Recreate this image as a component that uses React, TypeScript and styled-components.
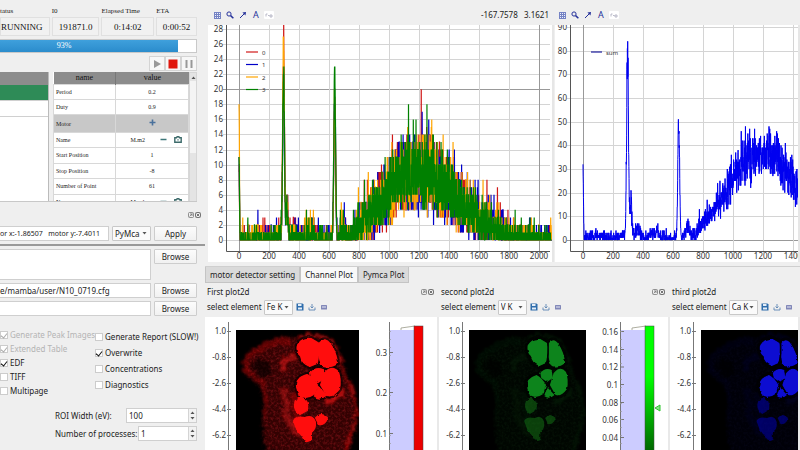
import React from "react";
import styled, { createGlobalStyle } from "styled-components";

const ui = `"Noto Sans", "Open Sans", sans-serif`;
const serif = `"Liberation Serif", "Times New Roman", serif`;

const GlobalStyle = createGlobalStyle`
  * { box-sizing: border-box; }
  body { margin: 0; background: #efefef; color: #222; font: 8px/12px ${ui}; }
  button, input, select, textarea { font: inherit; color: inherit; margin: 0; }
`;

/* ---------- layout ---------- */

const Page = styled.div`
  display: grid;
  grid-template-columns: minmax(205px, 1fr) minmax(0, 3fr);
  height: 100vh;
  overflow: hidden;
`;

const Sidebar = styled.aside`
  display: flex;
  flex-direction: column;
  padding: 6px 8px 0 0;
  min-width: 0;
`;

const Workspace = styled.main`
  display: flex;
  flex-direction: column;
  min-width: 0;
  min-height: 0;
`;

/* ---------- scan status ---------- */

const StatusGrid = styled.dl`
  display: grid;
  grid-template-columns: 50fr 48fr 53fr 41fr;
  column-gap: 2px;
  margin: 0;
  font-family: ${serif};
`;

const StatusItem = styled.div`
  min-width: 0;
  dt { font-size: 7px; line-height: 11px; }
  dd {
    margin: 0;
    height: 19px;
    border: 1px solid #e0e0e0;
    background: #f1f1f1;
    font-size: 9px;
    line-height: 18px;
    text-align: center;
    color: #111;
    white-space: nowrap;
  }
  &:first-child dd { padding-right: 7px; text-align: right; }
`;

const Progress = styled.div`
  display: grid;
  height: 14px;
  margin-top: 3px;
  border: 1px solid #c9c9c9;
  border-left: 0;
  background: #fff;
  > * { grid-area: 1 / 1; }
`;

const ProgressFill = styled.div`
  height: 12px;
  background: linear-gradient(#3fa0dc, #2b8ccc);
`;

const ProgressLabel = styled.span`
  padding-left: 29%;
  color: #fff;
  font: 8px/12px ${serif};
`;

const Transport = styled.div`
  display: flex;
  justify-content: flex-end;
  margin: 3px 0 1px;
`;

const TransportButton = styled.button`
  display: grid;
  place-items: center;
  width: 16px;
  height: 15px;
  padding: 0;
  border: 1px solid #d4d4d4;
  background: #f7f7f7;
`;

/* ---------- parameter table ---------- */

const ScanArea = styled.div`
  display: grid;
  grid-template-columns: 49fr 144fr;
  column-gap: 4px;
  height: 130px;
  border-bottom: 1px solid #c8c8c8;
`;

const ScanList = styled.div`
  background: #fff;
  border-right: 1px solid #bbb;
`;

const ListHead = styled.div`
  height: 13px;
  background: #8c8c8c;
`;

const ListRow = styled.div<{ $active?: boolean }>`
  height: 16px;
  background: ${(p) => (p.$active ? "#2e8b57" : "#fff")};
  border-bottom: 1px solid #d0d0d0;
`;

const TableScroll = styled.div`
  display: grid;
  grid-template-columns: minmax(0, 1fr) 8px;
  overflow: hidden;
  background: #fff;
`;

const ParamTable = styled.table`
  width: 100%;
  height: 138px;
  border-collapse: collapse;
  table-layout: fixed;
  font: 6px/8px ${serif};
  th { height: 12px; padding: 0; background: #8c8c8c; font-size: 8px; font-weight: 400; color: #111; }
  th:first-child { width: 46%; border-right: 1px solid #777; }
  td { padding: 0 2px; border: 1px solid #d8d8d8; text-align: center; }
  td:first-child { text-align: left; }
`;

const ParamRow = styled.tr<{ $group?: boolean }>`
  background: ${(p) => (p.$group ? "#c8c8c8" : "#fff")};
`;

const MotorCell = styled.div`
  display: flex;
  justify-content: flex-end;
  align-items: center;
  gap: 15px;
`;

const CellTools = styled.span`
  display: flex;
  gap: 7px;
  padding-right: 4px;
`;

const CellButton = styled.button`
  display: inline-grid;
  place-items: center;
  padding: 0;
  border: 0;
  background: none;
`;

const Scrollbar = styled.div`
  display: flex;
  flex-direction: column;
  justify-content: space-between;
  align-items: center;
  padding: 3px 0;
  background: linear-gradient(#f4f4f4, #f4f4f4) 0 8px / 100% 72px no-repeat #e4e4e4;
  border: 1px solid #d6d6d6;
`;

/* ---------- form controls ---------- */

const DockButtons = styled.div`
  display: flex;
  gap: 1px;
`;

const DockRow = styled.div`
  display: flex;
  justify-content: flex-end;
  margin: 10px -4px 8px 0;
`;

const ControlRow = styled.div`
  display: flex;
  gap: 3px;
  align-items: flex-start;
`;

const TextField = styled.input`
  flex: 1;
  min-width: 0;
  height: 15px;
  padding: 0 2px 0 0;
  border: 1px solid #cfcfcf;
  border-left: 0;
  background: #fff;
`;

const PositionField = styled(TextField)`
  padding: 0;
  font-size: 7px;
`;

const FileList = styled.textarea`
  flex: 1;
  min-width: 0;
  height: 31px;
  border: 1px solid #cfcfcf;
  border-left: 0;
  background: #fff;
  resize: none;
`;

const PushButton = styled.button`
  width: 43px;
  height: 15px;
  padding: 0;
  border: 1px solid #cdcdcd;
  border-radius: 1px;
  background: linear-gradient(#fcfcfc, #f1f1f1);
  line-height: 12px;
`;

const SelectFrame = styled.label<{ $w: number }>`
  display: flex;
  align-items: center;
  width: ${(p) => p.$w}px;
  height: 15px;
  padding-right: 3px;
  border: 1px solid #c8c8c8;
  border-radius: 1px;
  background: #fafafa;
  select { flex: 1; min-width: 0; height: 13px; padding: 0 0 0 2px; border: 0; background: none; appearance: none; line-height: 12px; }
  svg { flex: none; pointer-events: none; }
`;

const Divider = styled.hr`
  width: calc(100% + 8px);
  margin: 3px 0 3px;
  border: 0;
  border-top: 2px solid #999;
`;

const FileRows = styled.div`
  display: flex;
  flex-direction: column;
  gap: 3px;
`;

const Options = styled.div`
  display: grid;
  grid-template-columns: 95fr 102fr;
  margin-top: 12px;
`;

const OptionColumn = styled.div<{ $step: number; $top: number }>`
  display: grid;
  align-content: start;
  grid-auto-rows: ${(p) => p.$step}px;
  padding-top: ${(p) => p.$top}px;
`;

const Check = styled.label<{ $dim?: boolean }>`
  display: flex;
  align-items: center;
  gap: 2px;
  color: ${(p) => (p.$dim ? "#b4b4b4" : "#222")};
  white-space: nowrap;
  input {
    display: grid;
    place-items: center;
    flex: none;
    width: 8px;
    height: 8px;
    appearance: none;
    border: 1px solid #ccc;
    background: #fff;
  }
  input:checked::after {
    content: "";
    width: 3px;
    height: 5px;
    border: solid ${(p) => (p.$dim ? "#aaa" : "#111")};
    border-width: 0 1px 1px 0;
    rotate: 38deg;
  }
`;

const NumberRows = styled.div`
  display: grid;
  gap: 3px;
  margin-top: 10px;
  padding-left: 55px;
`;

const NumberRow = styled.div`
  display: flex;
  align-items: center;
  justify-content: space-between;
  height: 15px;
  white-space: nowrap;
`;

const Spin = styled.div<{ $w: number }>`
  display: flex;
  width: ${(p) => p.$w}px;
  height: 15px;
  border: 1px solid #cfcfcf;
  background: #fff;
  input { flex: 1; min-width: 0; padding: 0 2px; border: 0; background: none; appearance: textfield; }
  input::-webkit-inner-spin-button { display: none; }
`;

const SpinButtons = styled.div`
  display: grid;
  width: 8px;
  background: #f2f2f2;
  border-left: 1px solid #d4d4d4;
  button { display: grid; place-items: center; padding: 0; border: 0; background: none; }
`;

/* ---------- plots ---------- */

const Charts = styled.section`
  display: grid;
  grid-template-columns: 349fr 246fr;
`;

const ChartPanel = styled.div`
  min-width: 0;
  padding-left: 3px;
  & + & { padding-left: 1px; }
`;

const PlotTools = styled.div`
  display: flex;
  align-items: center;
  gap: 3px;
  height: 25px;
  padding: 5px 5px 0 4px;
  ${ChartPanel} + ${ChartPanel} & { padding-left: 2px; }
`;

const ToolButton = styled.button`
  display: grid;
  place-items: center;
  width: 10px;
  height: 10px;
  padding: 0;
  border: 0;
  background: none;
  color: #24309a;
  line-height: 10px;
`;

const LetterButton = styled(ToolButton)`
  font-size: 9px;
`;

const Readout = styled.output`
  margin-left: auto;
  white-space: pre;
`;

const ChartSvg = styled.svg`
  display: block;
  width: 100%;
  height: 237px;
  background: #fff;
  border-right: 2px solid #e6e6e6;
  text { font: 8px ${ui}; fill: #333; }
`;

const Tabs = styled.nav`
  display: flex;
  height: 17px;
  margin-top: 4px;
  border-top: 1px solid #cfcfcf;
`;

const Tab = styled.button<{ $active?: boolean }>`
  padding: 0 4px;
  height: 16px;
  border: 1px solid #c4c4c4;
  border-top: 0;
  background: ${(p) => (p.$active ? "#f9f9f9" : "#dadada")};
  white-space: nowrap;
`;

const Maps = styled.section`
  display: grid;
  grid-template-columns: 234fr 231fr 130fr;
  flex: 1;
  min-height: 0;
`;

const MapPanel = styled.div`
  display: flex;
  flex-direction: column;
  min-width: 0;
  min-height: 0;
  overflow: hidden;
`;

const MapHead = styled.header`
  display: flex;
  align-items: center;
  justify-content: space-between;
  height: 15px;
  margin-top: 1px;
  padding: 0 5px 0 2px;
`;

const MapTools = styled.div`
  display: flex;
  align-items: center;
  gap: 2px;
  height: 16px;
  margin-bottom: 2px;
  padding-left: 2px;
  white-space: nowrap;
`;

const MapSvg = styled.svg`
  display: block;
  flex: 1;
  width: 100%;
  min-height: 0;
  background: #fff;
  border-right: 2px solid #e9e9e9;
  text { font: 8px ${ui}; fill: #333; text-anchor: end; }
`;

/* ---------- icons ---------- */

const Caret = ({ up }: { up?: boolean }) => (
  <svg width="5" height="3" viewBox="0 0 5 3">
    <path d={up ? "M.5 3 2.5.5 4.5 3z" : "M.5 0 2.5 2.5 4.5 0z"} fill="#555" />
  </svg>
);

const Plus = () => (
  <svg width="7" height="7" viewBox="0 0 7 7"><path d="M3.5.5v6M.5 3.5h6" stroke="#4a719c" strokeWidth="1.6" /></svg>
);
const Minus = () => (
  <svg width="7" height="7" viewBox="0 0 7 7"><path d="M.5 3.5h6" stroke="#3d7779" strokeWidth="1.5" /></svg>
);
const Camera = () => (
  <svg width="8" height="7" viewBox="0 0 8 7"><path d="M.8 1.8h1.700l.6-1h1.800l.6 1h1.700v4.400H.8z" fill="none" stroke="#3d6b6b" strokeWidth="1.4" /><circle cx="4" cy="3.9" r=".8" fill="#6d9292" /></svg>
);

const Dock = () => (
  <DockButtons>
    <CellButton aria-label="Float">
      <svg width="6" height="6" viewBox="0 0 6 6" fill="none" stroke="#777" strokeWidth=".8"><rect x=".5" y=".5" width="5" height="5" rx="1" /><path d="M1.5 4.5l3-3M2 2h2v2" /></svg>
    </CellButton>
    <CellButton aria-label="Close">
      <svg width="6" height="6" viewBox="0 0 6 6" fill="none" stroke="#666" strokeWidth=".9"><rect x=".5" y=".5" width="5" height="5" rx="1" /><path d="M1.5 1.5l3 3M4.5 1.5l-3 3" /></svg>
    </CellButton>
  </DockButtons>
);

function ChartToolbar({ readout }: { readout?: string }) {
  return (
    <PlotTools>
      <ToolButton aria-label="Grid">
        <svg width="7" height="7" viewBox="0 0 7 7"><path d="M0 0h7v7H0z" fill="#7583c4" /><path d="M1 1h1v1H1zM3 1h1v1H3zM5 1h1v1H5zM1 3h1v1H1zM3 3h1v1H3zM5 3h1v1H5zM1 5h1v1H1zM3 5h1v1H3zM5 5h1v1H5z" fill="#eef1fb" /></svg>
      </ToolButton>
      <ToolButton aria-label="Zoom">
        <svg width="8" height="8" viewBox="0 0 8 8" fill="none" stroke="#24309a"><circle cx="3" cy="3" r="2.1" strokeWidth="1" /><path d="M4.6 4.6 7.4 7.2" strokeWidth="1.5" /></svg>
      </ToolButton>
      <ToolButton aria-label="Cursor">
        <svg width="8" height="8" viewBox="0 0 8 8"><path d="M1 7 5.5 2.5" stroke="#24309a" /><path d="M3.4 1.4 7 1l-.5 3.6z" fill="#24309a" /></svg>
      </ToolButton>
      <LetterButton>A</LetterButton>
      <ToolButton aria-label="Fit">
        <svg width="10" height="8" viewBox="0 0 10 8"><rect width="10" height="8" rx="1" fill="#fff" /><path d="M2 3v2.500M2 3h1.500M4 4.500h1.500M6 4h2v2H6z" fill="none" stroke="#aab" strokeWidth=".8" /></svg>
      </ToolButton>
      {readout && <Readout>{readout}</Readout>}
    </PlotTools>
  );
}

/* ---------- spectrum data ---------- */

function randomSource(seed: number) {
  let s = seed >>> 0;
  return () => {
    s = (s + 0x6d2b79f5) >>> 0;
    let t = Math.imul(s ^ (s >>> 15), 1 | s);
    t = (t + Math.imul(t ^ (t >>> 7), 61 | t)) ^ t;
    return ((t ^ (t >>> 14)) >>> 0) / 4294967296;
  };
}

const continuum: [number, number][] = [
  [0, 0.25], [90, 0.3], [120, 0.6], [150, 0.3], [240, 0.3], [270, 0.7], [345, 0.6], [370, 1.1], [390, 0.3], [430, 0.3],
  [450, 0.8], [480, 0.5], [495, 1.3], [510, 0.3], [660, 0.25], [700, 1.5], [720, 0.4], [760, 0.8], [800, 1.8],
  [850, 2.6], [900, 3.9], [950, 4.9], [1000, 6.4], [1060, 8.2], [1120, 8.7], [1200, 9.1], [1280, 9.2], [1330, 7.6],
  [1400, 6.5], [1450, 5.4], [1500, 4.4], [1600, 2.8], [1700, 1.6], [1800, 0.7], [1900, 0.4], [2090, 0.35],
];

function expected(x: number) {
  const i = Math.max(1, continuum.findIndex(([cx]) => cx >= x));
  const [x0, y0] = continuum[i - 1];
  const [x1, y1] = continuum[i];
  return y0 + ((y1 - y0) * (x - x0)) / (x1 - x0);
}

const gauss = (x: number, c: number, w: number) => Math.exp(-((x - c) ** 2) / (2 * w * w));

function spectrum(seed: number, scale: number, spread: number, heights: [number, number, number]) {
  const rnd = randomSource(seed);
  return Array.from({ length: 2086 }, (_, x) => {
    const mean = expected(x) * scale;
    const limit = Math.exp(-mean);
    let k = 0;
    for (let p = rnd(); p > limit; p *= rnd()) k += 1;
    if (mean > 3) k = Math.max(0, mean + (k - mean) * spread);
    const line =
      heights[0] * gauss(x, 0, 3) +
      heights[1] * gauss(x, 297, 6) * (0.8 + rnd() * 0.2) +
      heights[2] * gauss(x, 638, 6) * (0.8 + rnd() * 0.2) +
      heights[1] * 0.2 * gauss(x, 320, 6) * (0.4 + rnd() * 0.7);
    return [x, Math.round(k + line)] as const;
  });
}

const toPoints = (data: (readonly [number, number])[], x0: number, y0: number, sy: number) =>
  data.map(([x, y]) => `${(x0 + x * 0.15).toFixed(2)},${(y0 - y * sy).toFixed(1)}`).join(" ");

const channels = [
  { name: "0", color: "#d01818", data: spectrum(11, 1, 0.9, [9, 26, 19]) },
  { name: "1", color: "#0000c8", data: spectrum(27, 1, 0.9, [11, 22, 21]) },
  { name: "2", color: "#ffa500", data: spectrum(35, 1, 0.9, [18, 27, 20]) },
  { name: "3", color: "#008000", data: spectrum(52, 1, 0.85, [11, 24, 24]) },
];
const total = spectrum(73, 4, 0.85, [29, 86, 55]);

const steps = (n: number, size: number) => Array.from({ length: n }, (_, i) => i * size);

function Axes(p: { x0: number; axis: number; unit: number; ys: number[]; dark: number[]; width: number }) {
  return (
    <g>
      {p.ys.map((v) => {
        const y = Math.round(215 - v * p.unit);
        return (
          <g key={v}>
            <path d={`M${p.axis - 3} ${y + 0.5}H${p.width}`} stroke={p.dark.includes(v) ? "#999" : "#d4d4d4"} />
            <text x={p.axis - 3} y={y + 3} textAnchor="end">{v}</text>
          </g>
        );
      })}
      {steps(11, 200).map((v) => {
        const x = Math.round(p.x0 + v * 0.15);
        return (
          <g key={v}>
            <path d={`M${x + 0.5} 0V228`} stroke={v === 0 || v === 2000 ? "#999" : "#d4d4d4"} />
            <text x={x} y="234" textAnchor="middle">{v}</text>
          </g>
        );
      })}
      <path d={`M${p.axis + 0.5} 0V226.5H${p.width}`} fill="none" stroke="#555" />
    </g>
  );
}

function ChannelChart() {
  return (
    <ChartSvg viewBox="0 0 344 237" preserveAspectRatio="xMinYMin slice" role="img" aria-label="Channel spectra">
      <Axes x0={31} axis={18} unit={7.54} ys={steps(15, 2)} dark={[20]} width={342} />
      {channels.map((c, i) => (
        <g key={c.name}>
          <polyline points={toPoints(c.data, 31, 215, 7.54)} fill="none" stroke={c.color} strokeWidth="1.2" />
          <path d={`M38 ${27 + i * 12.5}h12`} stroke={c.color} strokeWidth="1.2" />
          <text x="54" y={29.5 + i * 12.5} style={{ fontSize: 6 }}>{c.name}</text>
        </g>
      ))}
    </ChartSvg>
  );
}

function SumChart() {
  return (
    <ChartSvg viewBox="0 0 243 237" preserveAspectRatio="xMinYMin slice" role="img" aria-label="Sum spectrum">
      <Axes x0={28} axis={15} unit={2.366} ys={steps(10, 10)} dark={[0]} width={400} />
      <polyline points={toPoints(total, 28, 215, 2.366)} fill="none" stroke="#0000f0" strokeWidth="1" />
      <path d="M36 27h11" stroke="#1c1c9c" strokeWidth="1.2" />
      <text x="51" y="29.500" style={{ fontSize: 6 }}>sum</text>
    </ChartSvg>
  );
}

/* ---------- element maps ---------- */

const cells = [
  "M62 15Q66 8 75 9L82 13Q83 22 81 33L74 36Q66 33 65 26Q60 22 62 15Z",
  "M84 13Q89 7 94 14Q100 22 101 33Q95 38 87 36Q83 30 84 24Z",
  "M75 43Q80 37 87 40L88 48L82 52L76 48Z",
  "M61 57Q60 48 71 45Q77 48 81 55L78 64Q69 70 63 64Z",
  "M89 43Q96 35 102 42Q105 50 103 59Q97 67 91 65L85 55Z",
  "M79 66L82 57L90 65Q84 70 79 66Z",
  "M59 74Q60 67 66 68Q73 71 71 80L64 84Q58 80 59 74Z",
  "M58 91Q60 86 69 88Q77 85 79 92Q80 99 75 102L75 109Q70 114 67 107L61 99Z",
  "M80 88Q85 82 91 88Q89 95 83 94Z",
];

const body = "M8 33Q10 20 27 16Q38 5 56 8Q74 2 92 8Q104 18 109 40Q118 60 122 80Q121 104 112 122H30Q24 96 28 72Q26 54 14 48Q6 43 8 33Z";

type Glow = { id: string; tint: string; lit: number; tissue: number; merge: number; grain: string };

function Specimen({ id, tint, lit, tissue, merge, grain }: Glow) {
  return (
    <g>
      <defs>
        <filter id={`${id}-grain`} x="-5%" y="-5%" width="110%" height="110%">
          <feTurbulence type="fractalNoise" baseFrequency="0.4" numOctaves="2" seed="8" />
          <feColorMatrix values={grain} result="speck" />
          <feGaussianBlur in="SourceGraphic" stdDeviation="2.5" result="shape" />
          <feComposite in="speck" in2="shape" operator="in" />
          <feGaussianBlur stdDeviation="0.4" />
        </filter>
        <filter id={`${id}-soft`} x="-10%" y="-10%" width="120%" height="120%">
          <feTurbulence type="fractalNoise" baseFrequency="0.25" numOctaves="1" seed="4" result="n" />
          <feDisplacementMap in="SourceGraphic" in2="n" scale="3" xChannelSelector="R" yChannelSelector="G" />
          <feGaussianBlur stdDeviation="0.5" />
        </filter>
        <filter id={`${id}-haze`} x="-30%" y="-30%" width="160%" height="160%">
          <feTurbulence type="fractalNoise" baseFrequency="0.2" numOctaves="3" seed="9" result="n" />
          <feDisplacementMap in="SourceGraphic" in2="n" scale="9" xChannelSelector="R" yChannelSelector="G" />
          <feGaussianBlur stdDeviation="1.3" />
        </filter>
      </defs>
      <rect width="140" height="150" fill="#000" />
      <g opacity={tissue}>
        <path d={body} fill={tint} opacity=".2" filter={`url(#${id}-haze)`} />
        <path d={body} fill={tint} opacity=".35" filter={`url(#${id}-grain)`} />
        <g fill="none" stroke={tint} filter={`url(#${id}-haze)`}>
          <path d="M62 7Q82 1 96 12Q105 28 109 45Q118 62 121 79Q120 98 108 120" strokeWidth="3" opacity=".45" />
          <path d="M9 40Q7 25 24 19Q38 8 56 14" strokeWidth="6" opacity=".22" />
          <path d="M9 38Q13 46 27 52Q32 70 28 88" strokeWidth="4" opacity=".2" />
          <path d="M48 42Q45 28 60 26" strokeWidth="8" opacity=".45" />
          <path d="M46 58Q52 70 50 84Q54 98 66 106" strokeWidth="7" opacity=".35" />
          <path d="M88 72Q98 72 106 60" strokeWidth="6" opacity=".6" />
          <path d="M58 62Q62 80 60 96" strokeWidth="8" opacity=".3" />
        </g>
        <path d="M17 34Q26 25 35 36Q35 47 28 50Q20 44 17 34Z" fill="#000" opacity=".6" filter={`url(#${id}-haze)`} />
      </g>
      <g fill="#000" stroke="#000" strokeWidth="6" opacity=".6" filter={`url(#${id}-soft)`}>
        {cells.slice(0, 6).map((d) => <path key={d} d={d} />)}
      </g>
      <g fill={tint} stroke={tint} strokeWidth={merge} filter={`url(#${id}-soft)`}>
        {cells.map((d, i) => <path key={d} d={d} opacity={i > 5 && lit < 1 ? lit * 0.45 : lit} />)}
      </g>
    </g>
  );
}

const mapTicks = ["1.0", "-0.8", "-2.6", "-4.4", "-6.2"];

type MapProps = {
  title: string;
  element: string;
  axis: number;
  image: number;
  imageWidth: number;
  width: number;
  glow: Glow;
  bar?: { axis: number; labels: [string, number][]; top: string; bottom: string; marker?: boolean };
};

function ElementMap({ title, element, axis, image, imageWidth, width, glow, bar }: MapProps) {
  return (
    <MapPanel>
      <MapHead><span>{title}</span>{bar && <Dock />}</MapHead>
      <MapTools>
        <span>select element</span>
        <SelectFrame $w={29}>
          <select aria-label={`${title} element`} defaultValue={element}><option>{element}</option></select>
          <Caret />
        </SelectFrame>
        <ToolButton aria-label="Save">
          <svg width="8" height="8" viewBox="0 0 8 8"><path d="M.5.5h6l1 1v6h-7z" fill="#2f6dac" /><path d="M2 1h3.500v2H2zM2 4.500h4V6.500H2z" fill="#e4eef8" /></svg>
        </ToolButton>
        <ToolButton aria-label="Export">
          <svg width="8" height="8" viewBox="0 0 8 8" fill="none" stroke="#5f87b4" strokeWidth=".9"><path d="M4 1v4M2.500 3.500 4 5l1.500-1.500M1 4.500V7h6V4.500" /></svg>
        </ToolButton>
        <ToolButton aria-label="Print">
          <svg width="8" height="8" viewBox="0 0 8 8"><rect x="1" y="2" width="6" height="4.500" rx=".6" fill="#8288b8" /><path d="M2 4h4" stroke="#e7e9f4" /></svg>
        </ToolButton>
      </MapTools>
      <MapSvg viewBox={`0 0 ${width} 133`} preserveAspectRatio="xMinYMin slice" role="img" aria-label={`${element} map`}>
        <path d={`M${axis + 0.5} 5V160`} stroke="#777" />
        {mapTicks.map((t, i) => (
          <g key={t}>
            <path d={`M${axis - 1} ${14.5 + i * 26}h4`} stroke="#777" />
            <text x={axis - 2} y={17 + i * 26}>{t}</text>
          </g>
        ))}
        <svg x={image} y="13" width={imageWidth} height="140" viewBox={`0 0 ${bar ? 123 : 140} 140`} preserveAspectRatio="none">
          <Specimen {...glow} />
        </svg>
        {bar && (
          <g>
            <rect x={bar.axis} y="13" width="26" height="140" fill="#ccccff" />
            <path d={`M${bar.axis + 0.5} 5V160`} stroke="#777" />
            <path d={`M${bar.axis + 12} 13v-2l14-2`} fill="none" stroke="#998" strokeWidth=".8" />
            <defs>
              <linearGradient id={`${glow.id}-bar`} x1="0" y1="0" x2="0" y2="1">
                <stop offset="0" stopColor={bar.top} /><stop offset=".4" stopColor={bar.top} /><stop offset="1" stopColor={bar.bottom} />
              </linearGradient>
            </defs>
            <rect x={bar.axis + 25} y="9" width="9" height="126" fill={`url(#${glow.id}-bar)`} stroke="#444" strokeWidth=".5" />
            {bar.labels.map(([t, y]) => (
              <g key={t}>
                <path d={`M${bar.axis} ${y}h4`} stroke="#777" />
                <text x={bar.axis - 2} y={y + 3}>{t}</text>
              </g>
            ))}
            {steps(16, 8).map((y) => <path key={y} d={`M${bar.axis} ${y + 14.5}h2`} stroke="#999" strokeWidth=".7" />)}
            {bar.marker && <path d={`M${bar.axis + 35} 91l5-3v6z`} fill="#8be08b" stroke="#2cc52c" />}
          </g>
        )}
      </MapSvg>
    </MapPanel>
  );
}

/* ---------- sidebar ---------- */

const params: { name: string; value?: string; kind?: "group" | "motor" }[] = [
  { name: "Period", value: "0.2" },
  { name: "Duty", value: "0.9" },
  { name: "Motor", kind: "group" },
  { name: "Name", value: "M.m2", kind: "motor" },
  { name: "Start Position", value: "1" },
  { name: "Stop Position", value: "-8" },
  { name: "Number of Point", value: "61" },
  { name: "Name", value: "M.m1", kind: "motor" },
];

function ParamValue({ value, kind }: { value?: string; kind?: string }) {
  if (kind === "group") return <CellButton aria-label="Add motor"><Plus /></CellButton>;
  if (kind !== "motor") return <>{value}</>;
  return (
    <MotorCell>
      <span>{value}</span>
      <CellTools>
        <CellButton aria-label="Remove motor"><Minus /></CellButton>
        <CellButton aria-label="Snapshot"><Camera /></CellButton>
      </CellTools>
    </MotorCell>
  );
}

function Spinner({ id, value, width }: { id: string; value: number; width: number }) {
  return (
    <Spin $w={width}>
      <input id={id} type="number" defaultValue={value} />
      <SpinButtons>
        <button aria-label="Increase"><Caret up /></button>
        <button aria-label="Decrease"><Caret /></button>
      </SpinButtons>
    </Spin>
  );
}

function ScanPanel() {
  const progress = 93;
  return (
    <>
      <StatusGrid>
        <StatusItem><dt>tatus</dt><dd>RUNNING</dd></StatusItem>
        <StatusItem><dt>I0</dt><dd>191871.0</dd></StatusItem>
        <StatusItem><dt>Elapsed Time</dt><dd>0:14:02</dd></StatusItem>
        <StatusItem><dt>ETA</dt><dd>0:00:52</dd></StatusItem>
      </StatusGrid>
      <Progress role="progressbar" aria-valuenow={progress}>
        <ProgressFill style={{ width: "91%" }} />
        <ProgressLabel>{progress}%</ProgressLabel>
      </Progress>
      <Transport>
        <TransportButton aria-label="Play"><svg width="10" height="10" viewBox="0 0 10 10"><path d="M2 1l7 4-7 4z" fill="#999" /></svg></TransportButton>
        <TransportButton aria-label="Stop"><svg width="10" height="10" viewBox="0 0 10 10"><rect x=".5" y=".5" width="9" height="9" fill="#e0160c" /></svg></TransportButton>
        <TransportButton aria-label="Pause"><svg width="10" height="10" viewBox="0 0 10 10"><path d="M1.500 1h2v8h-2zM6.500 1h2v8h-2z" fill="#999" /></svg></TransportButton>
      </Transport>
      <ScanArea>
        <ScanList><ListHead /><ListRow $active /><ListRow /></ScanList>
        <TableScroll>
          <ParamTable>
            <thead><tr><th scope="col">name</th><th scope="col">value</th></tr></thead>
            <tbody>
              {params.map((p, i) => (
                <ParamRow key={i} $group={p.kind === "group"}>
                  <td>{p.name}</td>
                  <td><ParamValue value={p.value} kind={p.kind} /></td>
                </ParamRow>
              ))}
            </tbody>
          </ParamTable>
          <Scrollbar><Caret up /><Caret /></Scrollbar>
        </TableScroll>
      </ScanArea>
    </>
  );
}

function FitPanel() {
  return (
    <>
      <DockRow><Dock /></DockRow>
      <ControlRow>
        <PositionField aria-label="Motor positions" defaultValue="or x:-1.86507   motor y:-7.4011" />
        <SelectFrame $w={39}>
          <select aria-label="Fit engine" defaultValue="PyMca"><option>PyMca</option></select>
          <Caret />
        </SelectFrame>
        <PushButton>Apply</PushButton>
      </ControlRow>
      <Divider />
      <FileRows>
        <ControlRow><FileList aria-label="Input files" /><PushButton>Browse</PushButton></ControlRow>
        <ControlRow><TextField aria-label="Configuration file" defaultValue="e/mamba/user/N10_0719.cfg" /><PushButton>Browse</PushButton></ControlRow>
        <ControlRow><TextField aria-label="Output folder" /><PushButton>Browse</PushButton></ControlRow>
      </FileRows>
      <Options>
        <OptionColumn $step={14} $top={0}>
          <Check $dim><input type="checkbox" defaultChecked disabled />Generate Peak Images</Check>
          <Check $dim><input type="checkbox" defaultChecked disabled />Extended Table</Check>
          <Check><input type="checkbox" defaultChecked />EDF</Check>
          <Check><input type="checkbox" />TIFF</Check>
          <Check><input type="checkbox" />Multipage</Check>
        </OptionColumn>
        <OptionColumn $step={16} $top={1}>
          <Check><input type="checkbox" />Generate Report (SLOW!)</Check>
          <Check><input type="checkbox" defaultChecked />Overwrite</Check>
          <Check><input type="checkbox" />Concentrations</Check>
          <Check><input type="checkbox" />Diagnostics</Check>
        </OptionColumn>
      </Options>
      <NumberRows>
        <NumberRow><label htmlFor="roi">ROI Width (eV):</label><Spinner id="roi" value={100} width={71} /></NumberRow>
        <NumberRow><label htmlFor="procs">Number of processes:</label><Spinner id="procs" value={1} width={59} /></NumberRow>
      </NumberRows>
    </>
  );
}

export default function App() {
  return (
    <>
      <GlobalStyle />
      <Page>
        <Sidebar>
          <ScanPanel />
          <FitPanel />
        </Sidebar>
        <Workspace>
          <Charts>
            <ChartPanel><ChartToolbar readout="-167.7578   3.1621" /><ChannelChart /></ChartPanel>
            <ChartPanel><ChartToolbar /><SumChart /></ChartPanel>
          </Charts>
          <Tabs>
            <Tab>motor detector setting</Tab>
            <Tab $active>Channel Plot</Tab>
            <Tab>Pymca Plot</Tab>
          </Tabs>
          <Maps>
            <ElementMap
              title="First plot2d" element="Fe K" axis={23} image={31} imageWidth={123} width={232}
              glow={{ id: "fe", tint: "#ff1010", lit: 1, tissue: 1, merge: 2, grain: "0 0 0 0 0.7  0 0 0 0 0.02  0 0 0 0 0.03  2.2 0 0 0 -0.9" }}
              bar={{ axis: 184, top: "#f40000", bottom: "#e80000", labels: [["0.3", 35.5], ["0.2", 75.5], ["0.1", 116.5]] }}
            />
            <ElementMap
              title="second plot2d" element="V K" axis={23} image={30} imageWidth={117} width={229}
              glow={{ id: "v", tint: "#128a1e", lit: 0.95, tissue: 0.22, merge: 0, grain: "0 0 0 0 0.05  0 0 0 0 0.5  0 0 0 0 0.08  2.2 0 0 0 -0.9" }}
              bar={{ axis: 181, top: "#00ff00", bottom: "#006400", marker: true, labels: [["0.16", 14.5], ["0.14", 32.5], ["0.12", 50], ["0.1", 67.5], ["0.08", 85.5], ["0.06", 102.5], ["0.04", 120.5]] }}
            />
            <ElementMap
              title="third plot2d" element="Ca K" axis={23} image={31} imageWidth={134} width={128}
              glow={{ id: "ca", tint: "#0c0cdc", lit: 0.95, tissue: 0.18, merge: 0, grain: "0 0 0 0 0.05  0 0 0 0 0.05  0 0 0 0 0.7  2.2 0 0 0 -0.9" }}
            />
          </Maps>
        </Workspace>
      </Page>
    </>
  );
}
